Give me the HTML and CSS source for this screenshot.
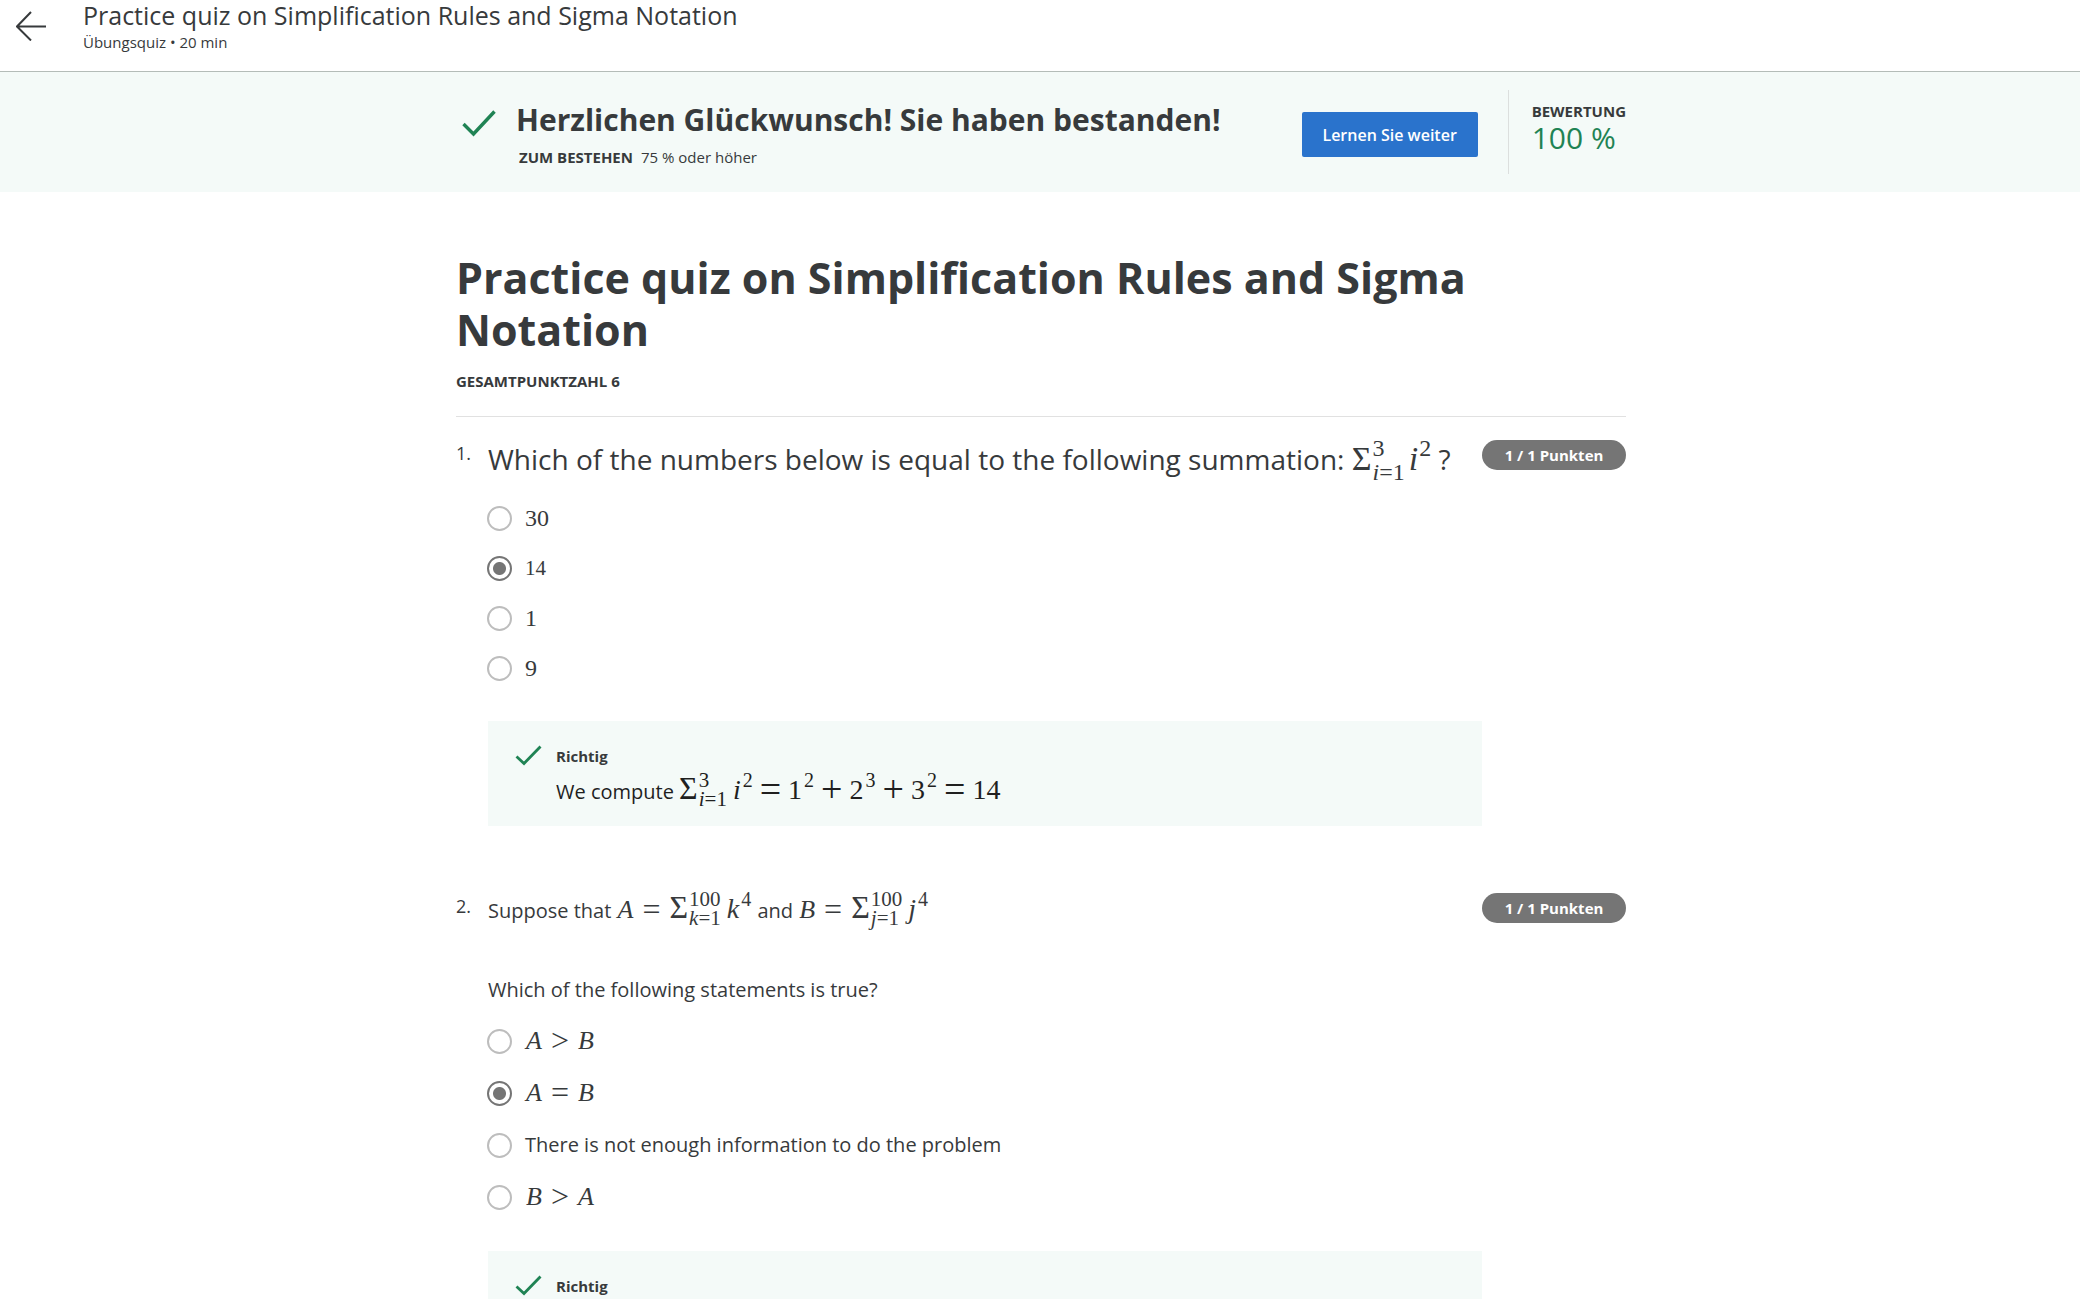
FILE: index.html
```html
<!DOCTYPE html>
<html lang="de">
<head>
<meta charset="utf-8">
<meta name="viewport" content="width=device-width, initial-scale=1">
<title>Practice quiz on Simplification Rules and Sigma Notation</title>
<link rel="stylesheet" href="styles.css">
</head>
<body>
<div class="page">
  <header class="topbar">
    <a class="back" href="#" aria-label="Zurück">
      <svg width="30" height="30" viewBox="0 0 30 30" fill="none" stroke="currentColor" stroke-width="2"><path d="M30 15.500H1M15 1L1 15.500L15 29.500"/></svg>
    </a>
    <div>
      <div class="topbar-title">Practice quiz on Simplification Rules and Sigma Notation</div>
      <div class="topbar-sub">Übungsquiz • 20 min</div>
    </div>
  </header>

  <section class="banner">
    <div class="column banner-row">
      <svg class="check-large" width="34" height="27" viewBox="0 0 34 27" fill="none" stroke="currentColor" stroke-width="3.400"><path d="M1.500 14L11.500 24L32.500 1.500"/></svg>
      <div class="banner-text">
        <h2>Herzlichen Glückwunsch! Sie haben bestanden!</h2>
        <p class="pass"><strong>ZUM BESTEHEN</strong><span>75 % oder höher</span></p>
      </div>
      <button class="continue" type="button">Lernen Sie weiter</button>
      <div class="grade">
        <div class="caps">BEWERTUNG</div>
        <div class="score">100 %</div>
      </div>
    </div>
  </section>

  <main class="column">
    <div class="intro">
      <h1>Practice quiz on Simplification Rules and Sigma Notation</h1>
      <div class="caps">GESAMTPUNKTZAHL 6</div>
    </div>

    <section class="question">
      <div class="number">1.</div>
      <div class="body">
        <div class="prompt prompt-large" id="q1">Which of the numbers below is equal to the following summation: <span class="math math-xl">Σ<span class="scripts"><span>3</span><span><i>i</i>=1</span></span><i>i</i><sup>2</sup></span> ?</div>
        <div class="options" role="radiogroup" aria-labelledby="q1">
          <label><input type="radio" name="q1"><span class="math">30</span></label>
          <label><input type="radio" name="q1" checked><span class="math math-s">14</span></label>
          <label><input type="radio" name="q1"><span class="math">1</span></label>
          <label><input type="radio" name="q1"><span class="math">9</span></label>
        </div>
        <div class="feedback">
          <svg width="27" height="21" viewBox="0 0 27 21" fill="none" stroke="currentColor" stroke-width="2.800"><path d="M1.500 11.500L9 18.500L25.500 1.500"/></svg>
          <div>
            <div class="verdict">Richtig</div>
            <div class="explain">We compute <span class="math math-l"><span class="sigma">Σ</span><span class="scripts"><span>3</span><span><i>i</i>=1</span></span><i>i</i><sup>2</sup><span class="op">=</span>1<sup>2</sup><span class="op">+</span>2<sup>3</sup><span class="op">+</span>3<sup>2</sup><span class="op">=</span>14</span></div>
          </div>
        </div>
      </div>
      <div class="points">1 / 1 Punkten</div>
    </section>

    <section class="question">
      <div class="number">2.</div>
      <div class="body">
        <div class="prompt">Suppose that <span class="math math-var"><i>A</i><span class="op">=</span><span class="math-l"><span class="sigma">Σ</span><span class="scripts"><span>100</span><span><i>k</i>=1</span></span><i>k</i><sup>4</sup></span></span> and <span class="math math-var"><i>B</i><span class="op">=</span><span class="math-l"><span class="sigma">Σ</span><span class="scripts"><span>100</span><span><i>j</i>=1</span></span><i>j</i><sup>4</sup></span></span></div>
        <div class="prompt prompt-second" id="q2">Which of the following statements is true?</div>
        <div class="options options-roomy" role="radiogroup" aria-labelledby="q2">
          <label><input type="radio" name="q2"><span class="math math-var"><i>A</i><span class="op">&gt;</span><i>B</i></span></label>
          <label><input type="radio" name="q2" checked><span class="math math-var"><i>A</i><span class="op">=</span><i>B</i></span></label>
          <label><input type="radio" name="q2"><span>There is not enough information to do the problem</span></label>
          <label><input type="radio" name="q2"><span class="math math-var"><i>B</i><span class="op">&gt;</span><i>A</i></span></label>
        </div>
        <div class="feedback">
          <svg width="27" height="21" viewBox="0 0 27 21" fill="none" stroke="currentColor" stroke-width="2.800"><path d="M1.500 11.500L9 18.500L25.500 1.500"/></svg>
          <div>
            <div class="verdict">Richtig</div>
          </div>
        </div>
      </div>
      <div class="points">1 / 1 Punkten</div>
    </section>
  </main>
</div>
</body>
</html>
```
FILE: styles.css
```css
* { box-sizing: border-box; }

body {
  margin: 0;
  background: #fff;
  color: #373a3c;
  font-family: "Open Sans", "Liberation Sans", sans-serif;
  font-size: 20px;
  line-height: 28px;
}

h1, h2, p { margin: 0; }
svg { display: block; flex: none; }

.page {
  height: 100vh;
  overflow: hidden;
}

/* Top bar */
.topbar {
  display: flex;
  gap: 37px;
  height: 72px;
  padding-left: 16px;
  border-bottom: 1px solid #b4bcb8;
}
.back {
  padding-top: 11px;
  color: #373a3c;
}
.topbar-title {
  font-size: 25px;
  line-height: 30px;
}
.topbar-sub {
  font-size: 15px;
  line-height: 24px;
}

.column {
  max-width: 1172px;
  margin: 0 auto;
  padding-left: 2px;
}

/* Result banner */
.banner {
  background: #f4faf8;
}
.banner-row {
  display: flex;
  height: 120px;
}
.check-large {
  margin: 38px 20px 0 6px;
  color: #1f8354;
}
.banner-text {
  flex: 1;
  padding-top: 28px;
}
.banner-text h2 {
  font-size: 30px;
  line-height: 40px;
}
.pass {
  display: flex;
  gap: 8px;
  padding: 6px 0 0 3px;
  font-size: 15px;
  line-height: 22px;
}
.continue {
  align-self: flex-start;
  width: 176px;
  height: 45px;
  margin: 40px 30px 0 0;
  border: 0;
  border-radius: 2px;
  background: #2a73cc;
  color: #fff;
  font: 600 16px "Open Sans", "Liberation Sans", sans-serif;
}
.grade {
  height: 84px;
  margin-top: 18px;
  padding: 10px 0 0 23px;
  border-left: 1px solid #dcdfde;
}
.caps {
  font-size: 15px;
  line-height: 22px;
  font-weight: 700;
}
.score {
  color: #1f8354;
  font-size: 30px;
  line-height: 32px;
}

/* Heading */
.intro {
  padding: 60px 0 24px;
  border-bottom: 1px solid #e1e1e1;
}
h1 {
  max-width: 1040px;
  margin-bottom: 14px;
  font-size: 43px;
  line-height: 52px;
}

/* Questions */
.question {
  display: flex;
  align-items: flex-start;
  padding-top: 23px;
}
.question + .question { padding-top: 67px; }
.number {
  width: 32px;
  font-size: 18px;
  line-height: 26px;
}
.body {
  flex: 1;
  min-width: 0;
}
.points {
  width: 144px;
  border-radius: 15px;
  background: #757575;
  color: #fff;
  font-size: 15px;
  line-height: 30px;
  font-weight: 700;
  text-align: center;
}
.prompt {
  height: 53px;
  line-height: 36px;
}
.prompt-large { font-size: 28px; line-height: 38px; }
.prompt-second { height: 43px; margin-top: 26px; }

.options label {
  display: flex;
  align-items: center;
  gap: 13px;
  height: 50px;
}
.options.options-roomy label { height: 52px; }
.options input {
  appearance: none;
  width: 25px;
  height: 25px;
  margin: 0 0 0 -1px;
  border: 2px solid #bdbdbd;
  border-radius: 50%;
}
.options input:checked {
  border-color: #757575;
  background: radial-gradient(circle, #757575 6px, transparent 7px);
}

.feedback {
  display: flex;
  gap: 14px;
  height: 105px;
  margin-top: 28px;
  padding: 24px 27px 0;
  background: #f4faf8;
  color: #1f1f1f;
}
.feedback svg { color: #1f8354; }
.verdict {
  color: #373a3c;
  font-size: 15px;
  line-height: 22px;
  font-weight: 700;
}
.explain { line-height: 50px; }

/* Formulas */
.math, .math-l {
  font-family: "Liberation Serif", "Times New Roman", serif;
  font-size: 24px;
  line-height: 24px;
  white-space: nowrap;
}
.math-s { font-size: 21px; }
.math-var { margin: 0 1px; font-size: 26px; }
.math-l { font-size: 28px; }
.math-xl { font-size: 34px; }
.sigma { font-size: 32px; }
.math sup {
  margin-left: 2px;
  font-size: 20px;
  line-height: 0;
  vertical-align: 12px;
}
.math-xl sup { margin-left: 1px; font-size: 24px; vertical-align: 14px; }
.op {
  margin: 0 7px;
  font-size: 38px;
  line-height: 0;
  vertical-align: -3px;
}
.math-var .op { margin: 0 9px; font-size: 32px; vertical-align: -2px; }
.scripts {
  display: inline-flex;
  flex-direction: column;
  margin: -8px 6px -8px 1px;
  font-size: 21px;
  line-height: 19px;
  vertical-align: 12px;
}
.math-xl .scripts {
  margin-right: 4px;
  font-size: 24px;
  line-height: 24px;
  vertical-align: 14px;
}
```
